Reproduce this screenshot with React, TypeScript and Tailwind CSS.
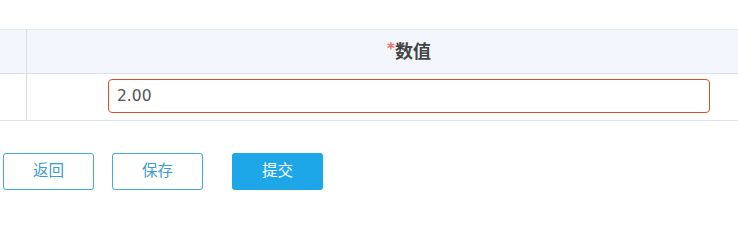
import React from "react";

const font = { fontFamily: '"DejaVu Sans", "Noto Sans CJK SC", sans-serif' };

export default function App() {
  return (
    <div
      className="w-[738px] h-[215px] overflow-hidden bg-white text-[#333]"
      style={font}
    >
      <div className="pt-[29px]">
        <div className="w-[791px] border-t border-[#e6e9ef]">
          {/* header */}
          <div className="flex h-[44px] bg-[#f3f7fd] border-b border-[#dbe4ee]">
            <div className="w-[27px] shrink-0 border-r border-[#d8dce2]" />
            <div className="flex-1 flex items-center justify-center text-[18px] font-bold text-[#444]">
              <span className="text-[#f56c6c] text-[15px] -mt-[5px]">*</span>
              数值
            </div>
          </div>
          {/* body */}
          <div className="flex h-[47px] border-b border-[#dfe3e8]">
            <div className="w-[27px] shrink-0 border-r border-[#d8dce2]" />
            <div className="flex-1 pt-[5px] px-[81px]">
              <input
                defaultValue="2.00"
                className="w-full h-[34px] px-[8px] text-[15.5px] text-[#555] border border-[#d2542f] rounded-[4px] outline-none"
                style={font}
              />
            </div>
          </div>
        </div>
      </div>
      <div className="flex items-center pt-[32px] pl-[3px] text-[15.5px]">
        <button className="w-[91px] h-[37px] rounded-[3px] border border-[#45a9d9] text-[#3d9ccc] bg-white">
          返回
        </button>
        <button className="ml-[18px] w-[91px] h-[37px] rounded-[3px] border border-[#45a9d9] text-[#3d9ccc] bg-white">
          保存
        </button>
        <button className="ml-[29px] w-[91px] h-[37px] rounded-[3px] bg-[#1da7e8] text-white">
          提交
        </button>
      </div>
    </div>
  );
}
